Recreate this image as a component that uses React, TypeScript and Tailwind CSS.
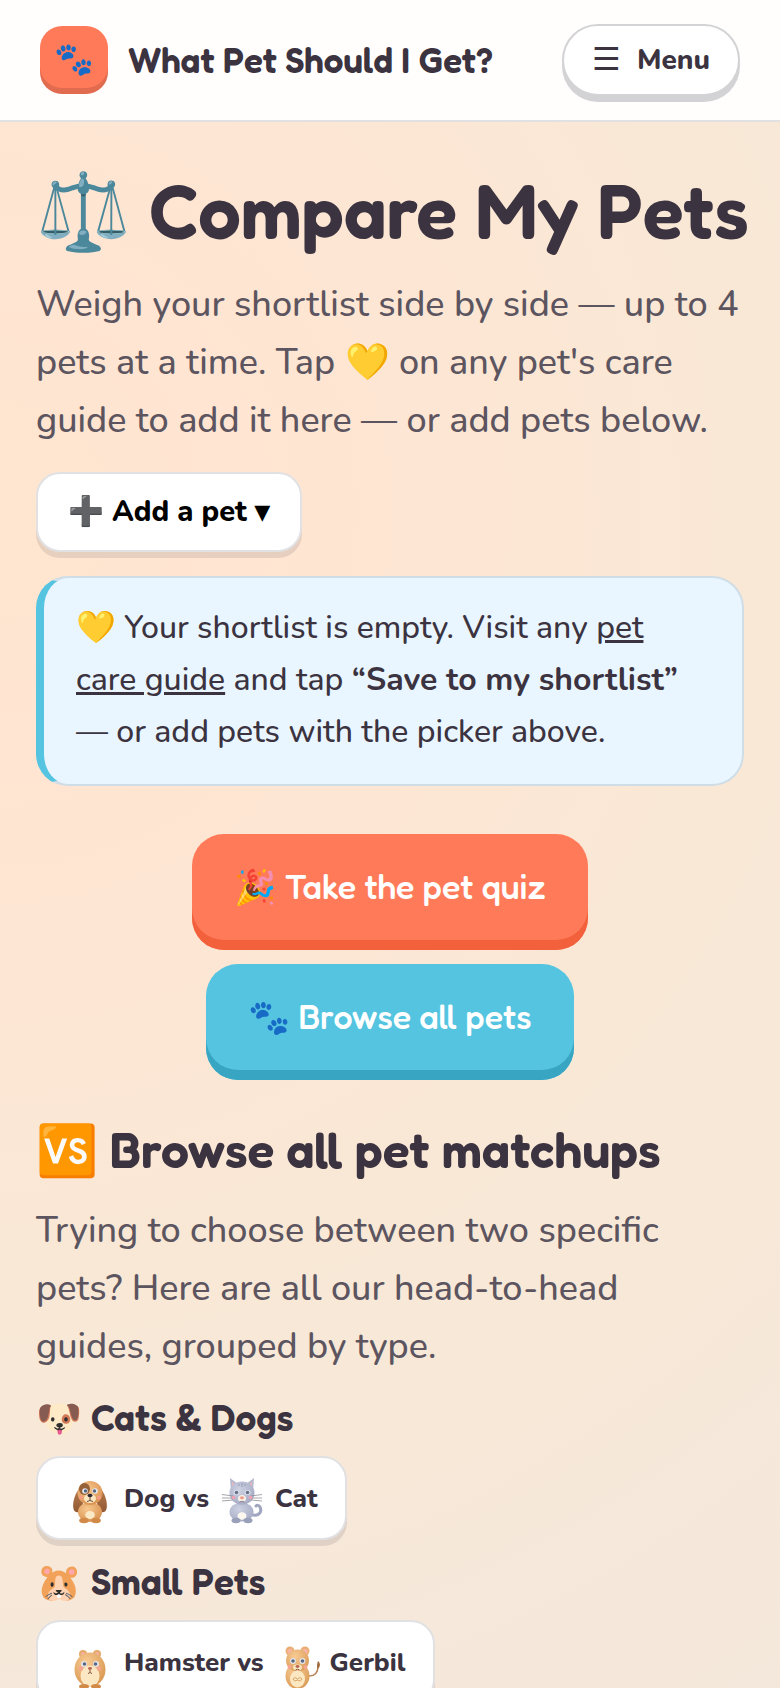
import { ReactNode } from "react";

interface Matchup {
  first: string;
  second: string;
  firstIcon: ReactNode;
  secondIcon: ReactNode;
}

interface MatchupGroup {
  emoji: string;
  title: string;
  matchups: Matchup[];
}

const DogIcon = () => (
  <svg viewBox="0 -3 50 54" className="h-[54px] w-[50px]" aria-hidden="true">
    <defs>
      <radialGradient id="dogFur" cx="40%" cy="35%" r="70%">
        <stop offset="0" stopColor="#f8c88f" />
        <stop offset="1" stopColor="#d99150" />
      </radialGradient>
      <linearGradient id="dogEar" x1="0" y1="0" x2="0" y2="1">
        <stop offset="0" stopColor="#b97b4e" />
        <stop offset="1" stopColor="#925a33" />
      </linearGradient>
    </defs>
    <path d="M15 13c-6 5-9 16-7.500 22 1 4 5 4 7 2 3-4 4-17 .5-24z" fill="url(#dogEar)" />
    <path d="M33 13c6 5 9 16 7.500 22-1 4-5 4-7 2-3-4-4-17-.5-24z" fill="url(#dogEar)" />
    <ellipse cx="24" cy="38" rx="12" ry="10" fill="url(#dogFur)" />
    <ellipse cx="24" cy="19" rx="12.500" ry="12" fill="url(#dogFur)" />
    <ellipse cx="18.500" cy="15" rx="5.500" ry="6" fill="#95623a" />
    <ellipse cx="24" cy="24.500" rx="6" ry="4.500" fill="#fbe6c0" />
    <ellipse cx="19" cy="17" rx="2.800" ry="2.800" fill="#e6ebf2" />
    <ellipse cx="29" cy="17" rx="2.800" ry="2.800" fill="#e6ebf2" />
    <circle cx="19.500" cy="17" r="1.700" fill="#5a6780" />
    <circle cx="28.500" cy="17" r="1.700" fill="#5a6780" />
    <circle cx="15" cy="23.500" r="2" fill="#f79a86" />
    <circle cx="33" cy="23.500" r="2" fill="#f79a86" />
    <ellipse cx="24" cy="21.500" rx="2.500" ry="1.800" fill="#2e2a38" />
    <path d="M24 23v3M21 27.500q3-2 6 0" fill="none" stroke="#6b4a3a" strokeWidth="1" />
    <ellipse cx="24" cy="41" rx="4.800" ry="4" fill="#fbe9c6" />
    <ellipse cx="18" cy="46.500" rx="4.800" ry="2.800" fill="#d18a48" />
    <ellipse cx="30" cy="46.500" rx="4.800" ry="2.800" fill="#d18a48" />
  </svg>
);

const CatIcon = () => (
  <svg viewBox="0 -3 50 54" className="h-[54px] w-[50px]" aria-hidden="true">
    <defs>
      <radialGradient id="catFur" cx="40%" cy="35%" r="70%">
        <stop offset="0" stopColor="#cdd1e2" />
        <stop offset="1" stopColor="#a5abc4" />
      </radialGradient>
    </defs>
    <path d="M36 41c7 1 9-4 7-8-1-2-3-2-4-1" fill="none" stroke="#a0a6be" strokeWidth="3" strokeLinecap="round" />
    <path d="M13 4l8 6-7 8zM37 4l-8 6 7 8z" fill="#b4b9ce" />
    <path d="M15 8l4 3-4 4zM35 8l-4 3 4 4z" fill="#eeb4b8" />
    <ellipse cx="24.500" cy="38" rx="12" ry="9.500" fill="url(#catFur)" />
    <ellipse cx="25" cy="19" rx="12.500" ry="11.500" fill="url(#catFur)" />
    <path d="M25 9v4M22 10v2M28 10v2" stroke="#969cb5" strokeWidth="1" />
    <ellipse cx="19.500" cy="18.500" rx="3" ry="2.500" fill="#dfe3ec" />
    <ellipse cx="30.500" cy="18.500" rx="3" ry="2.500" fill="#dfe3ec" />
    <circle cx="19.500" cy="18.500" r="1.800" fill="#66708a" />
    <circle cx="30.500" cy="18.500" r="1.800" fill="#66708a" />
    <path d="M5 20.500l11 1.500M5 24h11M5 27l11-1M45 20.500L34 22M45 24H34M45 27l-11-1" stroke="#8f8d94" strokeWidth=".8" />
    <circle cx="16.500" cy="23.500" r="1.800" fill="#f3a1b3" />
    <circle cx="33.500" cy="23.500" r="1.800" fill="#f3a1b3" />
    <ellipse cx="25" cy="24.500" rx="4" ry="3.500" fill="#f7efe9" />
    <ellipse cx="25" cy="23.800" rx="2" ry="1.500" fill="#ee9c86" />
    <path d="M22.500 28q2.500-1.500 5 0" fill="none" stroke="#6c6472" strokeWidth=".8" />
    <ellipse cx="25" cy="42" rx="4.500" ry="3.800" fill="#fdf8ef" />
    <ellipse cx="19" cy="46.500" rx="4.500" ry="2.800" fill="#99a0b9" />
    <ellipse cx="31" cy="46.500" rx="4.500" ry="2.800" fill="#99a0b9" />
  </svg>
);

const HamsterIcon = () => (
  <svg viewBox="0 -7 50 54" className="h-[54px] w-[50px]" aria-hidden="true">
    <defs>
      <radialGradient id="hamsterFur" cx="40%" cy="30%" r="75%">
        <stop offset="0" stopColor="#f8cb94" />
        <stop offset="1" stopColor="#d8964f" />
      </radialGradient>
    </defs>
    <circle cx="17" cy="12" r="4" fill="#e6aa6b" />
    <circle cx="31" cy="12" r="4" fill="#e6aa6b" />
    <circle cx="17" cy="12.500" r="2.200" fill="#f4b3a2" />
    <circle cx="31" cy="12.500" r="2.200" fill="#f4b3a2" />
    <ellipse cx="24" cy="27.500" rx="15.500" ry="17" fill="url(#hamsterFur)" />
    <ellipse cx="24" cy="34" rx="9.500" ry="10.500" fill="#fbe8c3" />
    <circle cx="18" cy="22" r="3" fill="#e3e8f0" />
    <circle cx="30" cy="22" r="3" fill="#e3e8f0" />
    <circle cx="18.500" cy="22" r="1.800" fill="#5c6880" />
    <circle cx="29.500" cy="22" r="1.800" fill="#5c6880" />
    <circle cx="15" cy="26.500" r="2.200" fill="#f8a493" />
    <circle cx="33" cy="26.500" r="2.200" fill="#f8a493" />
    <ellipse cx="24" cy="26.500" rx="2" ry="1.400" fill="#bd6651" />
    <path d="M24 28v2M22 31.500q2-2 4 0" fill="none" stroke="#80523e" strokeWidth="1" />
    <ellipse cx="18" cy="44.500" rx="5" ry="2.500" fill="#d18a48" />
    <ellipse cx="30" cy="44.500" rx="5" ry="2.500" fill="#d18a48" />
  </svg>
);

const GerbilIcon = () => (
  <svg viewBox="-4 -3 50 54" className="h-[54px] w-[50px]" aria-hidden="true">
    <defs>
      <radialGradient id="gerbilFur" cx="40%" cy="30%" r="75%">
        <stop offset="0" stopColor="#f8cb94" />
        <stop offset="1" stopColor="#da9a56" />
      </radialGradient>
    </defs>
    <path d="M33 38q9 0 9-10" fill="none" stroke="#b98456" strokeWidth="1.500" />
    <path d="M42 31q-2-3 0-8q4 3 0 8z" fill="#a36b3c" />
    <circle cx="14" cy="13" r="4.500" fill="#e9ae70" />
    <circle cx="29" cy="13" r="4.500" fill="#e9ae70" />
    <circle cx="14" cy="13.500" r="2.700" fill="#f6b3a6" />
    <circle cx="29" cy="13.500" r="2.700" fill="#f6b3a6" />
    <ellipse cx="21.500" cy="38" rx="12" ry="13" fill="url(#gerbilFur)" />
    <ellipse cx="21.500" cy="22.500" rx="11.500" ry="11" fill="url(#gerbilFur)" />
    <ellipse cx="21.500" cy="41" rx="7.500" ry="8.500" fill="#fbe8c3" />
    <ellipse cx="21.500" cy="29.500" rx="4.500" ry="3" fill="#fbe8c3" />
    <circle cx="17" cy="23" r="2.900" fill="#e3e8f0" />
    <circle cx="26.500" cy="23" r="2.900" fill="#e3e8f0" />
    <circle cx="17" cy="23" r="1.800" fill="#5c6880" />
    <circle cx="26.500" cy="23" r="1.800" fill="#5c6880" />
    <circle cx="13.500" cy="29" r="2" fill="#f8a493" />
    <circle cx="29.500" cy="29" r="2" fill="#f8a493" />
    <ellipse cx="21.500" cy="28.500" rx="2" ry="1.400" fill="#bd6651" />
    <path d="M19.500 32q2-1.500 4 0" fill="none" stroke="#80523e" strokeWidth="1" />
    <path d="M17 41q2-3 4.500 0q2.500-3 4.500 0q-1 3-4.500 1q-3.500 2-4.500-1z" fill="none" stroke="#d9a465" strokeWidth="1" />
  </svg>
);

const groups: MatchupGroup[] = [
  {
    emoji: "🐶",
    title: "Cats & Dogs",
    matchups: [
      { first: "Dog", second: "Cat", firstIcon: <DogIcon />, secondIcon: <CatIcon /> },
    ],
  },
  {
    emoji: "🐹",
    title: "Small Pets",
    matchups: [
      { first: "Hamster", second: "Gerbil", firstIcon: <HamsterIcon />, secondIcon: <GerbilIcon /> },
    ],
  },
];

const MatchupChip: React.FC<Matchup> = ({ first, second, firstIcon, secondIcon }) => {
  return (
    <a
      href="#"
      className="inline-flex h-[84px] items-center gap-2 rounded-3xl border-2 border-[#e1e1e4] bg-white px-7 text-[26px] font-extrabold shadow-[0_6px_0_rgba(59,51,64,0.12)]"
    >
      {firstIcon}
      <span>{first} vs</span>
      {secondIcon}
      <span>{second}</span>
    </a>
  );
};

const App: React.FC = () => {
  return (
    <div className="min-h-screen bg-[radial-gradient(circle_at_0%_30%,#ffe6d0_0%,#ffe5d2_18%,#f9e8d6_55%,#f4e8dc_100%)] font-['Nunito','Noto_Sans',sans-serif] text-[#3b3340]">
      <header className="flex h-[122px] items-center justify-between border-b-2 border-[#e1e1e4] bg-[#fffefd] px-10">
        <a href="#" className="flex items-center gap-5">
          <span className="flex size-[68px] items-center justify-center rounded-[22px] bg-[#ff7a59] text-[32px] shadow-[inset_0_-6px_0_rgba(0,0,0,0.12)]">
            🐾
          </span>
          <span className="font-['Fredoka','Lato',sans-serif] text-[35px] font-semibold">
            What Pet Should I Get?
          </span>
        </a>
        <button className="flex h-[72px] items-center gap-4 rounded-full border-2 border-[#d3d3d6] bg-white px-7 text-[28px] font-extrabold shadow-[0_6px_0_#d3d3d6]">
          <span className="text-[32px] font-normal">☰</span>
          Menu
        </button>
      </header>

      <main className="px-9 pt-10">
        <h1 className="font-['Fredoka','Lato',sans-serif] text-[76px] leading-[96px] font-semibold whitespace-nowrap">
          ⚖️ Compare My Pets
        </h1>
        <p className="mt-[18px] text-[36px] leading-[58px] font-medium text-[#5c5560]">
          Weigh your shortlist side by side — up to 4 pets at a time. Tap 💛 on
          any pet's care guide to add it here — or add pets below.
        </p>
        <button className="mt-[22px] h-20 rounded-3xl border-2 border-[#e1e1e4] bg-white px-[30px] text-[29px] font-extrabold text-black shadow-[0_6px_0_rgba(59,51,64,0.12)]">
          ➕ Add a pet ▾
        </button>

        <div className="mt-6 rounded-[32px] border-2 border-l-8 border-[#cfdde7] border-l-[#54c4e0] bg-[#e9f6ff] pt-6 pb-[26px] pr-8 pl-8 text-[32px] leading-[52px] font-medium">
          💛 Your shortlist is empty. Visit any{" "}
          <a href="#" className="underline">
            pet care guide
          </a>{" "}
          and tap <strong className="font-bold">“Save to my shortlist”</strong>{" "}
          — or add pets with the picker above.
        </div>

        <div className="mt-12 flex flex-col items-center gap-[14px] font-['Fredoka','Lato',sans-serif] text-[34px] font-medium text-white">
          <button className="h-[116px] rounded-[32px] bg-[#ff7a59] px-[42px] pb-3 shadow-[inset_0_-10px_0_#f2603c]">
            🎉 Take the pet quiz
          </button>
          <button className="h-[116px] rounded-[32px] bg-[#54c4e0] px-[42px] pb-3 shadow-[inset_0_-10px_0_#38a6c2]">
            🐾 Browse all pets
          </button>
        </div>

        <h2 className="mt-10 font-['Fredoka','Lato',sans-serif] text-[50px] leading-[60px] font-semibold">
          🆚 Browse all pet matchups
        </h2>
        <p className="mt-[22px] max-w-[700px] text-[36px] leading-[58px] font-medium text-[#5c5560]">
          Trying to choose between two specific pets? Here are all our
          head-to-head guides, grouped by type.
        </p>

        {groups.map((group) => (
          <section key={group.title} className="mb-4">
            <h3 className="mt-5 mb-4 font-['Fredoka','Lato',sans-serif] text-[37px] leading-[44px] font-semibold">
              {group.emoji} {group.title}
            </h3>
            <div className="flex flex-wrap gap-4">
              {group.matchups.map((matchup) => (
                <MatchupChip key={matchup.first} {...matchup} />
              ))}
            </div>
          </section>
        ))}
      </main>
    </div>
  );
};

export default App;
